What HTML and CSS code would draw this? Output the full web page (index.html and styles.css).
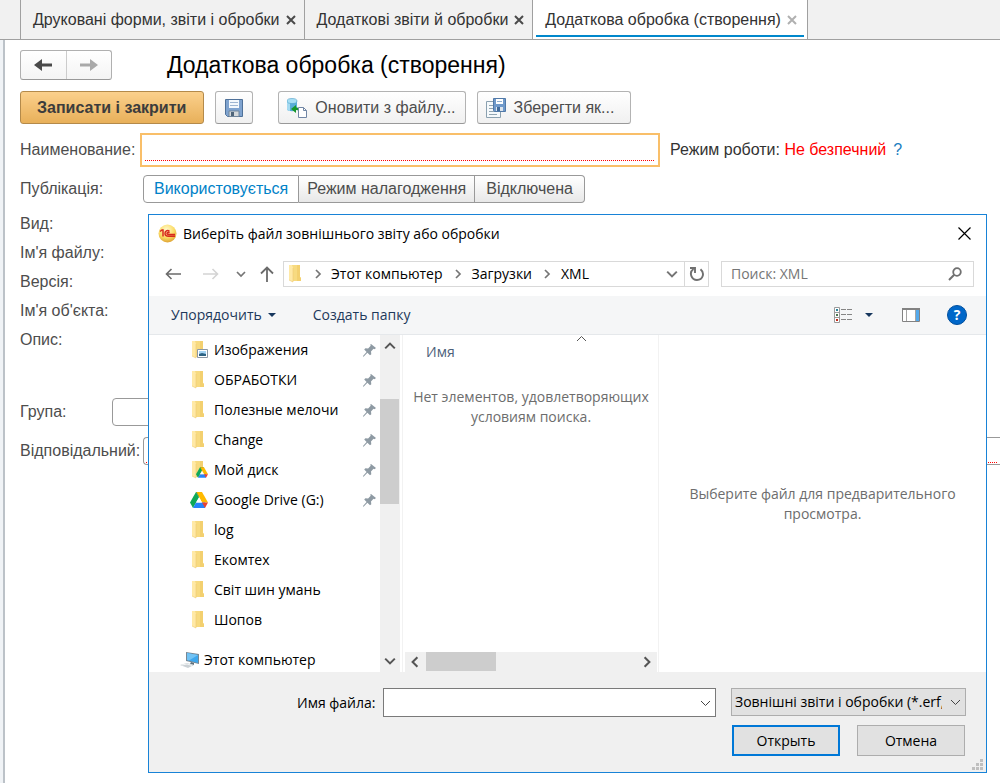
FILE: index.html
```html
<!DOCTYPE html>
<html lang="uk">
<head>
<meta charset="utf-8">
<title>Додаткова обробка (створення)</title>
<link rel="stylesheet" href="styles.css">
</head>
<body>
<svg class="defs" aria-hidden="true">
  <symbol id="folder" viewBox="0 0 18 18"><path d="M4 0h9v12l1 1v3H4z" fill="#f7da80"/><path d="M10 0h3v12l1 1v3h-4z" fill="#f3d06f"/><path d="M2 0h3l1 3v14l-4-2z" fill="#ffe9a6"/><path d="M2 15l4 2V3" fill="none" stroke="#eecb72" stroke-width=".6"/></symbol>
  <symbol id="drive" viewBox="0 0 18 16"><path d="M6 0L0 10.500 3 16 9 5.500z" fill="#0fa958"/><path d="M6 0h6L9 5.500z" fill="#0b8043"/><path d="M12 0H6.500L12 10.500h6z" fill="#ffba00"/><path d="M3 16L6 10.500h9L15 16z" fill="#2684fc"/><path d="M12 10.500h6L15 16z" fill="#ea4335"/><path d="M9 5.500l3 5H6z" fill="#fff"/></symbol>
  <symbol id="pin" viewBox="0 0 13 13"><path d="M8 0l5 4-1.500 1.200-1-.4L8 7.600l.3 2.600-1.300 1-2.600-2.500L.8 12.600 0 12.800l.2-1L3.600 8 1.200 5.400l1.200-1.200 2.700.2 2.600-2.600-.5-1z" fill="#8e9aa3"/></symbol>
  <symbol id="down" viewBox="0 0 10 10"><path d="M1 3l4 4 4-4" fill="none" stroke="currentColor" stroke-width="1.700"/></symbol>
  <symbol id="thin" viewBox="0 0 10 10"><path d="M.5 3L5 7.500 9.500 3" fill="none" stroke="currentColor"/></symbol>
  <symbol id="right" viewBox="0 0 10 10"><path d="M3 1l4 4-4 4" fill="none" stroke="currentColor" stroke-width="1.700"/></symbol>
  <symbol id="cross" viewBox="0 0 10 10"><path d="M1 1l8 8M9 1L1 9" fill="none" stroke="currentColor" stroke-width="2"/></symbol>
</svg>

<nav class="tabs">
  <div class="tab"><a href="#">Друковані форми, звіти і обробки</a><button class="tab-close" aria-label="Закрити"><svg><use href="#cross"/></svg></button></div>
  <div class="tab"><a href="#">Додаткові звіти й обробки</a><button class="tab-close" aria-label="Закрити"><svg><use href="#cross"/></svg></button></div>
  <div class="tab active"><a href="#">Додаткова обробка (створення)</a><button class="tab-close" aria-label="Закрити"><svg><use href="#cross"/></svg></button></div>
</nav>

<main class="page">
  <header class="heading">
    <div class="history">
      <button aria-label="Назад"><svg width="18" height="14" viewBox="0 0 18 14"><path d="M0 7l8-6v4.500h10v3H8V13z" fill="#4a4a4a"/></svg></button>
      <button aria-label="Вперед"><svg width="18" height="14" viewBox="0 0 18 14"><path d="M18 7l-8-6v4.500H0v3h10V13z" fill="#a9a9a9"/></svg></button>
    </div>
    <h1>Додаткова обробка (створення)</h1>
  </header>

  <div class="commands">
    <button class="cmd primary">Записати і закрити</button>
    <button class="cmd square" aria-label="Записати">
      <svg width="18" height="18" viewBox="0 0 18 18"><path d="M.5.500h17v17h-15l-2-2z" fill="#7fa3cf" stroke="#4f7199"/><path d="M4 1h10v8H4z" fill="#f4f8fc"/><path d="M5 3.500h8M5 6.500h8" stroke="#9fb6d2"/><path d="M4 12h10v5.500H4z" fill="#d4d8db" stroke="#70859b"/><path d="M6 13h3v4H6z" fill="#4f6479"/></svg>
    </button>
    <button class="cmd load">
      <svg width="20" height="20" viewBox="0 0 20 20"><path d="M0 3v8c0 3 10 3 10 0V3z" fill="#58add9"/><path d="M0 3v8c0 1 1 2 3 2V3z" fill="#a5daf1"/><ellipse cx="5" cy="3" rx="5" ry="2.500" fill="#a8dff5" stroke="#4d9fc8" stroke-width=".6"/><path d="M4 11l5-4v2.500c3 0 3.500 2 3.500 5-1-2-2-2.500-3.500-2.500V15z" fill="#15962b"/><path d="M11.500 9.500h5l3 3v7h-8z" fill="#fff" stroke="#7186a5"/><path d="M16.500 9.500v3h3" fill="none" stroke="#7186a5"/></svg>
      Оновити з файлу...</button>
    <button class="cmd save-as">
      <svg width="20" height="20" viewBox="0 0 20 20"><path d="M.5 3.500h14v16H.500z" fill="#f5f9fb" stroke="#8ba1b0"/><path d="M3 7.500h5M3 10.500h5M3 13.500h7M3 16.500h8" stroke="#91a5b2"/><path d="M7.500.500h12v13h-11l-1-1z" fill="#6f99ca" stroke="#5179a8"/><path d="M10 1h7v5h-7z" fill="#fff"/><path d="M11 3.500h5" stroke="#91afcf"/><path d="M10 9h7v4h-7z" fill="#dce4ec"/><path d="M11 9h3v4h-3z" fill="#416b9b"/></svg>
      Зберегти як...</button>
  </div>

  <div class="row name-row">
    <label class="name-label" for="name">Наименование:</label>
    <div class="name-box"><input id="name" type="text"></div>
    <span class="mode">Режим роботи: <em>Не безпечний</em></span><a class="hint" href="#">?</a>
  </div>

  <div class="row publish-row">
    <span class="label">Публікація:</span>
    <div class="segments"><button class="on">Використовується</button><button>Режим налагодження</button><button>Відключена</button></div>
  </div>

  <div class="facts">
    <span>Вид:</span><span>Ім'я файлу:</span><span>Версія:</span><span>Ім'я об'єкта:</span><span>Опис:</span>
  </div>
  <div class="row group-row"><label for="group">Група:</label><input id="group" type="text"></div>
  <div class="row owner-row"><label for="owner">Відповідальний:</label><div class="owner-box"><input id="owner" type="text"></div></div>
</main>

<section class="dialog" role="dialog" aria-labelledby="dialog-title">
  <header class="dialog-title">
    <svg width="19" height="19" viewBox="0 0 19 19"><defs><radialGradient id="gold" cx=".45" cy=".3" r=".7"><stop offset="0" stop-color="#fffbd0"/><stop offset=".6" stop-color="#fbdc66"/><stop offset="1" stop-color="#dfa435"/></radialGradient></defs><circle cx="9.500" cy="9.500" r="9" fill="url(#gold)"/><path d="M2 7.500L4 6h1v6.500M11.500 7.500C10 5.800 7 6.500 7 9.300s2 3 3.500 3H17M11.500 9c-1-1-2.500-.6-2.500.4 0 1 .8 1 1.500 1H17" fill="none" stroke="#d82b1f" stroke-width="1.500"/></svg>
    <h2 id="dialog-title">Виберіть файл зовнішнього звіту або обробки</h2>
    <button class="plain" aria-label="Закрыть"><svg width="13" height="13" viewBox="0 0 13 13"><path d="M.5.500l12 12M12.500.500l-12 12" stroke="#000" stroke-width="1.200"/></svg></button>
  </header>

  <div class="browse">
    <div class="arrows">
      <button class="plain" aria-label="Назад"><svg width="16" height="16" viewBox="0 0 16 16"><path d="M16 8H1.500M6.500 3L1.500 8l5 5" fill="none" stroke="#6b6b6b" stroke-width="1.600"/></svg></button>
      <button class="plain" aria-label="Вперед"><svg width="16" height="16" viewBox="0 0 16 16"><path d="M0 8h14.500M9.500 3l5 5-5 5" fill="none" stroke="#d4d4d4" stroke-width="1.600"/></svg></button>
      <button class="plain recent" aria-label="Последние"><svg width="10" height="10"><use href="#down"/></svg></button>
      <button class="plain" aria-label="Вверх"><svg width="16" height="16" viewBox="0 0 16 16"><path d="M8 16V1.500M2 7.500l6-6 6 6" fill="none" stroke="#6b6b6b" stroke-width="1.800"/></svg></button>
    </div>
    <div class="address">
      <svg width="18" height="18"><use href="#folder"/></svg>
      <svg class="sep" width="10" height="10"><use href="#right"/></svg><a href="#">Этот компьютер</a>
      <svg class="sep" width="10" height="10"><use href="#right"/></svg><a href="#">Загрузки</a>
      <svg class="sep" width="10" height="10"><use href="#right"/></svg><a href="#">XML</a>
      <button class="plain open-path" aria-label="Путь"><svg width="12" height="12"><use href="#down"/></svg></button>
      <button class="plain refresh" aria-label="Обновить"><svg width="16" height="16" viewBox="0 0 16 16"><path d="M4.500 3C-.5 6.500 2.500 14 8 14c6 0 8-7 3.500-10.700M1 2h5v5" fill="none" stroke="#707070" stroke-width="1.900"/></svg></button>
    </div>
    <div class="search"><input type="text" aria-label="Поиск" placeholder="Поиск: XML"><svg width="14" height="14" viewBox="0 0 14 14"><circle cx="9" cy="5" r="3.800" fill="none" stroke="#707070" stroke-width="1.800"/><path d="M6.200 7.800L1 13" stroke="#707070" stroke-width="2"/></svg></div>
  </div>

  <div class="toolbar">
    <button class="plain organize">Упорядочить <svg width="8" height="4" viewBox="0 0 8 4"><path d="M0 0h8L4 4z" fill="#17375e"/></svg></button>
    <button class="plain">Создать папку</button>
    <div class="tools">
      <button class="plain" aria-label="Вид"><svg width="18" height="16" viewBox="0 0 18 16"><path d="M.5.500h5v15h-5zM0 5.500h6M0 10.500h6" fill="#fff" stroke="#9b9b9b"/><path d="M7 2.500h5m1 0h5M7 7.500h5m1 0h5M7 12.500h5m1 0h5" stroke="#858585"/><path d="M2 2h2v2H2z" fill="#27839b"/><path d="M2 7h2v2H2z" fill="#4d7651"/><path d="M2 12h2v2H2z" fill="#c32919"/></svg></button>
      <button class="plain" aria-label="Выбор вида"><svg width="8" height="4" viewBox="0 0 8 4"><path d="M0 0h8L4 4z" fill="#17375e"/></svg></button>
      <button class="plain pane" aria-label="Область просмотра"><svg width="18" height="14" viewBox="0 0 18 14"><path d="M.5.500h17v13H.500z" fill="#fff" stroke="#828282"/><path d="M0 1h18" stroke="#828282" stroke-width="2"/><path d="M14 2h3v11h-3z" fill="#54a9eb"/><path d="M4.500 2v11M13.500 2v11" stroke="#a5a5a5"/></svg></button>
      <button class="help" aria-label="Справка">?</button>
    </div>
  </div>

  <div class="files">
    <div class="tree">
      <ul>
        <li><span class="icon"><svg width="18" height="18"><use href="#folder"/></svg><svg class="badge" width="11" height="9" viewBox="0 0 11 9"><path d="M.5.500h10v8H.500z" fill="#fff" stroke="#8c98a5"/><path d="M2 2h7v5H2z" fill="#a5d4f4"/><path d="M2 5l3-1 4 1v2H2z" fill="#2d6384"/></svg></span><a href="#">Изображения</a><svg class="pin"><use href="#pin"/></svg></li>
        <li><span class="icon"><svg width="18" height="18"><use href="#folder"/></svg></span><a href="#">ОБРАБОТКИ</a><svg class="pin"><use href="#pin"/></svg></li>
        <li><span class="icon"><svg width="18" height="18"><use href="#folder"/></svg></span><a href="#">Полезные мелочи</a><svg class="pin"><use href="#pin"/></svg></li>
        <li><span class="icon"><svg width="18" height="18"><use href="#folder"/></svg></span><a href="#">Change</a><svg class="pin"><use href="#pin"/></svg></li>
        <li><span class="icon"><svg width="18" height="18"><use href="#folder"/></svg><svg class="badge" width="12" height="11"><use href="#drive"/></svg></span><a href="#">Мой диск</a><svg class="pin"><use href="#pin"/></svg></li>
        <li><span class="icon"><svg width="18" height="18"><use href="#drive"/></svg></span><a href="#">Google Drive (G:)</a><svg class="pin"><use href="#pin"/></svg></li>
        <li><span class="icon"><svg width="18" height="18"><use href="#folder"/></svg></span><a href="#">log</a></li>
        <li><span class="icon"><svg width="18" height="18"><use href="#folder"/></svg></span><a href="#">Екомтех</a></li>
        <li><span class="icon"><svg width="18" height="18"><use href="#folder"/></svg></span><a href="#">Світ шин умань</a></li>
        <li><span class="icon"><svg width="18" height="18"><use href="#folder"/></svg></span><a href="#">Шопов</a></li>
        <li class="computer"><svg width="20" height="18" viewBox="0 0 20 18"><path d="M6 1l13 2v10L6 10z" fill="#778793"/><path d="M7 2l11 2v8L7 9z" fill="#3ea7ed"/><path d="M7 2l11 2-9 5.500L7 9z" fill="#72c3f4"/><path d="M11 11l3 1v2l-4-1z" fill="#5e707c"/><path d="M0 14l7-2 7 2-6 3z" fill="#cbd1d5"/><path d="M2 14l5-1 5 1.500" fill="none" stroke="#f2f4f5"/></svg><a href="#">Этот компьютер</a></li>
      </ul>
      <div class="vscroll"><svg class="flip" width="12" height="12"><use href="#down"/></svg><div class="vthumb"></div><svg width="12" height="12"><use href="#down"/></svg></div>
    </div>
    <div class="listing">
      <svg class="sort" width="11" height="7" viewBox="0 0 11 7"><path d="M1 6l4.500-4.500L10 6" fill="none" stroke="currentColor"/></svg>
      <button class="plain column">Имя</button>
      <p>Нет элементов, удовлетворяющих условиям поиска.</p>
      <div class="hscroll"><svg class="flip" width="12" height="12"><use href="#right"/></svg><div class="hthumb"></div><svg width="12" height="12"><use href="#right"/></svg></div>
    </div>
    <div class="preview"><p>Выберите файл для предварительного просмотра.</p></div>
  </div>

  <footer class="dialog-footer">
    <label for="filename">Имя файла:</label>
    <div class="combo filename"><input id="filename" type="text"><svg width="11" height="10"><use href="#thin"/></svg></div>
    <div class="side">
      <div class="combo filter"><select aria-label="Тип файла"><option>Зовнішні звіти і обробки (*.erf, *.epf)</option></select><svg width="11" height="10"><use href="#thin"/></svg></div>
      <div class="actions"><button class="default">Открыть</button><button>Отмена</button></div>
    </div>
    <svg class="grip" width="11" height="11" viewBox="0 0 11 11"><path d="M8 0h3v3H8zM4 4h3v3H4zM8 4h3v3H8zM0 8h3v3H0zM4 8h3v3H4zM8 8h3v3H8z" fill="#bfbfbf"/></svg>
  </footer>
</section>
</body>
</html>
```
FILE: styles.css
```css
* { box-sizing: border-box; }
body {
  margin: 0;
  min-height: 100vh;
  display: flex;
  flex-direction: column;
  position: relative;
  background: #fff;
  color: #4d4d4d;
  font: 16px/20px "Liberation Sans", Arial, sans-serif;
}
button, input, select { font: inherit; color: inherit; margin: 0; padding: 0; }
a { color: inherit; text-decoration: none; }
svg { display: block; flex: none; }
h1, h2, p, ul { margin: 0; padding: 0; font-weight: normal; }
.defs { position: absolute; width: 0; height: 0; }
.plain { display: flex; align-items: center; border: 0; background: none; }

/* Tabs */
.tabs {
  display: flex;
  height: 40px;
  padding-left: 20px;
  background: #f1f1f1;
  border-bottom: 1px solid #a0a0a0;
}
.tab {
  display: flex;
  align-items: center;
  gap: 6px;
  padding: 0 8px 0 12px;
  border-left: 1px solid #a0a0a0;
  color: #333;
  white-space: nowrap;
}
.tab.active {
  padding-right: 10px;
  border-right: 1px solid #a0a0a0;
  background: linear-gradient(#0088cc, #0088cc) 50% 35px / calc(100% - 6px) 2px no-repeat #fff;
}
.tab-close { padding: 0; border: 0; background: none; color: #4a4a4a; }
.tab-close svg { width: 10px; height: 10px; }
.active .tab-close { color: #b0b0b0; }

/* Form */
.page {
  flex: 1;
  padding: 10px 0 0 15px;
  border-left: 2px solid #bcc2c8;
  margin-left: 3px;
  box-shadow: -3px 0 #f0f3f6;
}
.heading { display: flex; align-items: center; height: 30px; gap: 55px; }
.heading h1 { font-size: 23px; line-height: 30px; color: #000; }
.history { display: flex; width: 92px; height: 30px; border: 1px solid #b0b0b0; border-bottom-color: #999; border-radius: 3px; background: linear-gradient(#fff, #f4f4f4); }
.history button { flex: 1; display: grid; place-items: center; border: 0; background: none; }
.history button + button { border-left: 1px solid #ccc; }
.commands { display: flex; margin-top: 11px; gap: 11px; }
.cmd {
  display: flex;
  align-items: center;
  gap: 8px;
  height: 33px;
  padding: 0 9px 0 8px;
  border: 1px solid #b3b3b3;
  border-bottom-color: #999;
  border-radius: 3px;
  background: linear-gradient(#fff, #f0f0f0);
  white-space: nowrap;
}
.cmd.primary { padding: 0 17px 0 16px; border-color: #b48a4a; background: linear-gradient(#fbd08c, #e8b05a); color: #3c3c3c; font-weight: bold; }
.cmd.square { width: 38px; padding: 0; justify-content: center; }
.cmd.load { margin-left: 14px; }
.cmd.save-as { padding-right: 16px; }
.row { display: flex; align-items: center; }
.name-row { height: 34px; margin-top: 9px; }
.name-label { width: 120px; white-space: nowrap; }
.name-box { flex: 0 1 520px; height: 34px; padding: 3px; border: 2px solid #f9bf69; }
.name-box input, .owner-box input {
  display: block;
  width: 100%;
  height: 23px;
  border: 0;
  outline: 0;
  background: repeating-linear-gradient(90deg, #f00 0 1px, #fff 1px 2px) 0 100% / 100% 1px no-repeat;
}
.mode { margin-left: 10px; white-space: nowrap; color: #333; }
.mode em { font-style: normal; color: #f00; }
.hint { margin-left: 7px; color: #1a7dc0; }
.publish-row { height: 28px; margin-top: 8px; }
.label { width: 123px; }
.segments { display: flex; height: 28px; }
.segments button { padding: 0 8px; border: 1px solid #999; border-left-width: 0; background: linear-gradient(#fff, #e8e8e8); white-space: nowrap; }
.segments button:first-child { padding: 0 10px; border-left-width: 1px; border-radius: 4px 0 0 4px; }
.segments button:last-child { padding: 0 11px; border-radius: 0 4px 4px 0; }
.segments .on { background: #fff; color: #0082c8; }
.facts { display: grid; grid-auto-rows: 29px; align-items: center; margin-top: 6px; }
.group-row { height: 28px; margin-top: 44px; }
.group-row label { width: 92px; }
.group-row input { flex: 0 1 480px; height: 28px; border: 1px solid #999; border-radius: 4px; }
.owner-row { height: 28px; margin-top: 11px; }
.owner-row label { width: 123px; }
.owner-box { flex: 1; height: 28px; padding: 2px; border: 1px solid #999; border-right: 0; border-radius: 4px 0 0 4px; }

/* File dialog */
.dialog {
  position: absolute;
  top: 214px;
  left: 148px;
  right: 13px;
  border: 1px solid #1883d7;
  background: #fff;
  color: #000;
  font: 14px/20px "Open Sans", "Noto Sans", sans-serif;
}
.dialog-title { display: flex; align-items: center; height: 37px; padding: 0 15px 0 9px; }
.dialog-title h2 { flex: 1; margin-left: 6px; font-size: 14px; line-height: 20px; }
.browse { display: flex; align-items: center; height: 43px; margin-bottom: 1px; padding: 0 12px 0 16px; }
.arrows { display: flex; align-items: center; width: 118px; }
.arrows .plain + .plain { margin-left: 22px; }
.arrows .recent + .plain { margin-left: 13px; }
.arrows .recent, .open-path, .sep { color: #757575; }
.arrows .plain.recent { margin-left: 17px; }
.address { flex: 1; display: flex; align-items: center; height: 26px; padding-left: 3px; border: 1px solid #d9d9d9; white-space: nowrap; }
.sep { margin: 0 8px; }
.address a + .sep { margin: 0 9px 0 10px; }
.open-path { margin-left: auto; }
.refresh { height: 24px; width: 24px; margin-left: 6px; justify-content: center; border-left: 1px solid #d9d9d9; }
.search { display: flex; align-items: center; width: 253px; height: 26px; margin-left: 12px; padding: 0 11px 0 9px; border: 1px solid #d9d9d9; }
.search input { flex: 1; min-width: 0; border: 0; outline: 0; }
.search input::placeholder { color: #757575; opacity: 1; }
.toolbar { display: flex; align-items: center; height: 39px; padding: 0 19px 0 22px; border-bottom: 1px solid #e5e8eb; background: #f5f6f7; color: #1e395b; }
.organize { gap: 6px; margin-right: 37px; }
.tools { display: flex; align-items: center; gap: 13px; margin-left: auto; }
.tools .pane { margin: 0 14px 0 16px; }
.help { width: 20px; height: 20px; border: 1px solid #004f9e; border-radius: 50%; background: #0067c9; color: #fff; line-height: 18px; font-weight: bold; }
.files { display: flex; height: 337px; }
.tree { display: flex; width: 251px; }
.tree ul { flex: 1; min-width: 0; list-style: none; }
.tree li { display: flex; align-items: center; height: 30px; padding: 0 4px 0 41px; white-space: nowrap; }
.tree li a { flex: 1; }
.icon { position: relative; width: 18px; margin-right: 6px; }
.badge { position: absolute; right: 0; bottom: 1px; }
.pin { width: 13px; height: 13px; }
.tree .computer { margin-top: 10px; padding-left: 31px; gap: 4px; }
.vscroll { display: flex; flex-direction: column; align-items: center; justify-content: space-between; width: 20px; padding: 5px 1px 5px 0; background: #f0f0f0; color: #555; }
.vthumb { width: 100%; height: 105px; margin: 47px 0 auto; background: #cdcdcd; }
.flip { transform: rotate(180deg); }
.listing { display: flex; flex-direction: column; width: 256px; margin-left: 2px; padding: 0 1px 0 2px; border-left: 1px solid #f2f2f2; }
.sort { align-self: center; margin-left: 101px; color: #555; }
.column { height: 20px; padding-left: 21px; color: #4c607a; }
.listing p { margin-top: 25px; color: #6d6d6d; text-align: center; }
.hscroll { display: flex; align-items: center; justify-content: space-between; height: 20px; margin-top: auto; padding: 0 4px; background: #f0f0f0; color: #555; }
.hthumb { width: 70px; height: 20px; margin: 0 auto 0 5px; border-bottom: 1px solid #f0f0f0; background: #cdcdcd; }
.preview { flex: 1; display: flex; align-items: center; justify-content: center; border-left: 1px solid #f2f2f2; color: #6d6d6d; text-align: center; }
.preview p { max-width: 290px; }
.dialog-footer { position: relative; display: flex; align-items: flex-start; height: 100px; padding: 16px 20px 0 148px; background: #f0f0f0; }
.dialog-footer label { width: 80px; line-height: 29px; margin-right: 6px; white-space: nowrap; }
.combo { display: flex; align-items: center; padding-right: 4px; border: 1px solid #7a7a7a; background: #fff; color: #444; }
.filename { flex: 1; height: 29px; }
.combo input, .combo select { flex: 1; min-width: 0; height: 100%; border: 0; outline: 0; background: none; color: #000; }
.combo select { appearance: none; padding-left: 3px; margin-right: 8px; }
.side { width: 235px; margin-left: 15px; }
.filter { height: 28px; border-color: #adadad; background: #e1e1e1; }
.actions { display: grid; grid-template-columns: 1fr 1fr; gap: 17px; margin-top: 9px; padding: 0 1px; }
.actions button { height: 31px; border: 1px solid #adadad; background: #e1e1e1; color: #000; }
.actions .default { border: 2px solid #0078d7; }
.grip { position: absolute; right: 3px; bottom: 2px; }
```
